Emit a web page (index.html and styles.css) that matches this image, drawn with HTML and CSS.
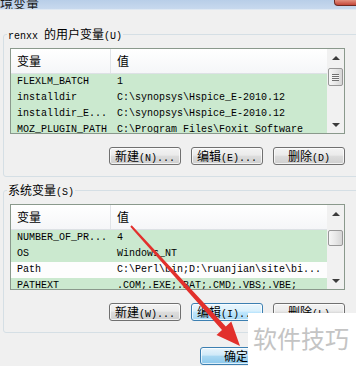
FILE: index.html
```html
<!DOCTYPE html>
<html lang="zh-CN">
<head>
  <meta charset="UTF-8" />
  <title>环境变量</title>
  <link rel="stylesheet" href="styles.css">
</head>
<body>
<div class="window">

  <div class="titlebar">
    <span class="title">环境变量</span>
    <span class="close"></span>
  </div>

  <div class="client">

    <fieldset class="group">
      <legend>renxx <span class="cj">的用户变量</span>(U)</legend>
      <div class="listview">
        <div class="lv-body">
          <div class="lv-head"><div class="c1 cj">变量</div><div class="c2 cj">值</div></div>
          <div class="lv-row"><div class="c1">FLEXLM_BATCH</div><div class="c2">1</div></div>
          <div class="lv-row"><div class="c1">installdir</div><div class="c2">C:\synopsys\Hspice_E-2010.12</div></div>
          <div class="lv-row"><div class="c1">installdir_E...</div><div class="c2">C:\synopsys\Hspice_E-2010.12</div></div>
          <div class="lv-row"><div class="c1">MOZ_PLUGIN_PATH</div><div class="c2">C:\Program Files\Foxit Software</div></div>
        </div>
        <div class="vscroll">
          <div class="sb-btn up"></div>
          <div class="sb-track"><div class="sb-thumb"><span class="grip"></span></div></div>
          <div class="sb-btn down"></div>
        </div>
      </div>
      <div class="gbtns">
        <button class="btn"><span class="cj">新建</span>(N)...</button>
        <button class="btn"><span class="cj">编辑</span>(E)...</button>
        <button class="btn"><span class="cj">删除</span>(D)</button>
      </div>
    </fieldset>

    <fieldset class="group sys">
      <legend><span class="cj">系统变量</span>(S)</legend>
      <div class="listview">
        <div class="lv-body">
          <div class="lv-head"><div class="c1 cj">变量</div><div class="c2 cj">值</div></div>
          <div class="lv-row"><div class="c1">NUMBER_OF_PR...</div><div class="c2">4</div></div>
          <div class="lv-row"><div class="c1">OS</div><div class="c2">Windows_NT</div></div>
          <div class="lv-row sel"><div class="c1">Path</div><div class="c2">C:\Perl\bin;D:\ruanjian\site\bi...</div></div>
          <div class="lv-row"><div class="c1">PATHEXT</div><div class="c2">.COM;.EXE;.BAT;.CMD;.VBS;.VBE;</div></div>
        </div>
        <div class="vscroll">
          <div class="sb-btn up"></div>
          <div class="sb-track"><div class="sb-thumb"></div></div>
          <div class="sb-btn down"></div>
        </div>
      </div>
      <div class="gbtns">
        <button class="btn"><span class="cj">新建</span>(W)...</button>
        <button class="btn focus"><span class="cj">编辑</span>(I)...</button>
        <button class="btn"><span class="cj">删除</span>(L)</button>
      </div>
    </fieldset>

    <div class="dlgbtns">
      <button class="btn default"><span class="cj">确定</span></button>
      <button class="btn"><span class="cj">取消</span></button>
    </div>
  </div>

  <!-- red annotation arrow -->
  <svg class="arrow" width="356" height="366" viewBox="0 0 356 366">
    <polygon points="131.7,225.3 225.8,326.5 231.3,321.5 240,346 216.5,334.9 222,329.9 130.3,226.7" fill="#e2302c"/>
  </svg>

  <div class="watermark">软件技巧</div>
</div>
</body>
</html>
```

FILE: styles.css
```css
* {
  box-sizing: border-box;
}

html, body {
  margin: 0;
  padding: 0;
}

body {
  width: 356px;
  height: 366px;
  overflow: hidden;
  background: #f0f0f0;
  font-family: "Liberation Mono", "Noto Sans CJK SC", monospace;
  font-size: 10px;
  color: #000;
}

.window {
  position: relative;
  width: 356px;
  height: 366px;
}

.cj {
  font-family: "Noto Sans CJK SC", sans-serif;
  font-size: 12px;
}

/* title bar, mostly cut off */
.titlebar {
  height: 10px;
  display: flex;
  align-items: flex-start;
  background: linear-gradient(#b8cee8, #c8d9ee);
  border-bottom: 1px solid #dfe8f2;
  overflow: hidden;
}

.title {
  font-family: "Noto Sans CJK SC", sans-serif;
  font-size: 13px;
  line-height: 13px;
  margin: -4px 0 0 -13px;
  color: #1a1a1a;
  text-decoration: underline;
}

.close {
  margin-left: auto;
  margin-right: -6px;
  width: 28px;
  height: 6px;
  background: linear-gradient(#e3907f, #c4473a);
  border: 1px solid #6e2a22;
  border-top: 0;
  border-radius: 0 0 4px 4px;
}

.client {
  padding: 17px 0 0 3px;
}

/* group boxes */
.group {
  margin: 0 -10px 0 0;
  padding: 7px 0 11px 6px;
  border: 1px solid #d5dfe5;
  border-radius: 3px;
  min-width: 0;
}

.group + .group {
  margin-top: 6px;
}

.group legend {
  height: 14px;
  line-height: 14px;
  padding: 0 1px;
  margin-left: -3px;
  white-space: nowrap;
}

.group legend .cj {
  line-height: 14px;
}

/* list views */
.listview {
  width: 335px;
  height: 86px;
  display: flex;
  border: 1px solid #8a998c;
  background: #cbe9cf;
}

.lv-body {
  flex: 1;
  min-width: 0;
  overflow: hidden;
}

.lv-head {
  display: flex;
  height: 25px;
  background: linear-gradient(#ffffff, #f5f6f8);
  border-bottom: 1px solid #dde1e5;
}

.lv-head div {
  line-height: 24px;
}

.lv-head .c1 {
  border-right: 1px solid #e1e4e8;
}

.c1 {
  flex: none;
  width: 100px;
  padding-left: 6px;
  overflow: hidden;
}

.c2 {
  flex: 1;
  padding-left: 6px;
  overflow: hidden;
}

.lv-row {
  display: flex;
  height: 16px;
  line-height: 16px;
  white-space: nowrap;
}

.lv-row.sel {
  background: #fdfdfd;
}

/* scroll bar */
.vscroll {
  flex: none;
  width: 17px;
  display: flex;
  flex-direction: column;
  background: #f1f1f1;
}

.sb-btn {
  height: 17px;
  flex: none;
  display: flex;
  align-items: center;
  justify-content: center;
}

.sb-btn::before {
  content: "";
  border-left: 4px solid transparent;
  border-right: 4px solid transparent;
}

.sb-btn.up::before {
  border-bottom: 4px solid #3c3c3c;
}

.sb-btn.down::before {
  border-top: 4px solid #3c3c3c;
}

.sb-track {
  flex: 1;
  padding: 0 1px;
}

.sb-thumb {
  height: 18px;
  margin-top: 2px;
  border: 1px solid #989898;
  border-radius: 2px;
  background: linear-gradient(to right, #f6f6f6, #e8e8e8 50%, #d6d6d6);
  display: flex;
  align-items: center;
  justify-content: center;
}

.sys .sb-thumb {
  height: 16px;
  margin-top: 8px;
}

.grip {
  width: 7px;
  height: 7px;
  background: repeating-linear-gradient(#707070 0 1px, #f4f4f4 1px 2px);
}

/* buttons */
.gbtns {
  width: 335px;
  margin-top: 13px;
  display: flex;
  justify-content: flex-end;
  gap: 10px;
}

.dlgbtns {
  margin-top: 14px;
  padding-right: 2px;
  display: flex;
  justify-content: flex-end;
  gap: 10px;
}

.btn {
  width: 72px;
  height: 18px;
  padding: 0;
  border: 1px solid #707070;
  border-radius: 3px;
  background: linear-gradient(#f3f3f3, #ebebeb 45%, #dddddd 50%, #cfcfcf);
  box-shadow: inset 0 0 0 1px rgba(255,255,255,0.7);
  font-family: "Liberation Mono", "Noto Sans CJK SC", monospace;
  font-size: 10px;
  line-height: 16px;
  color: #000;
  white-space: nowrap;
}

.btn .cj {
  line-height: 16px;
}

.btn.focus {
  border-color: #3c7fb1;
  background: linear-gradient(#eaf6fd, #d9f0fc 45%, #bee6fd 50%, #a7d9f5);
}

.btn.default {
  border-color: #3c7fb1;
  background: linear-gradient(#e8f4fc, #cfe9f8 45%, #a9d8f2 50%, #8cc8ec);
}

/* overlays */
.arrow {
  position: absolute;
  left: 0;
  top: 0;
  pointer-events: none;
}

.watermark {
  position: absolute;
  left: 248px;
  top: 313px;
  right: 0;
  bottom: 0;
  padding: 12px 0 0 5px;
  background: #fff;
  color: #c4c4c4;
  font-family: "Noto Sans CJK SC", sans-serif;
  font-size: 24px;
  line-height: 26px;
  white-space: nowrap;
}
```
